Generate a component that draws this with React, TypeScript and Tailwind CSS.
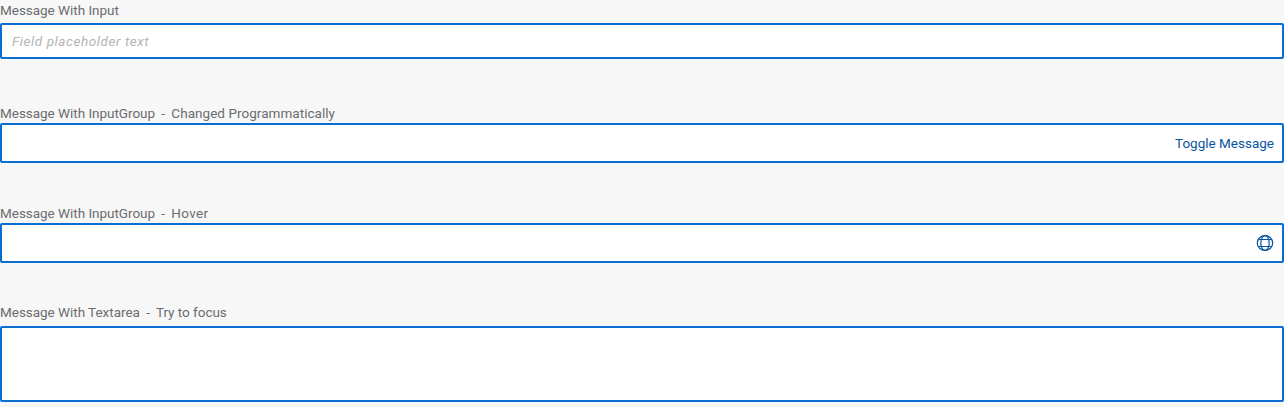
import React from "react";

const fieldClass =
  "block w-full rounded-[2px] border-2 border-[#0a6ed1] bg-white outline-none";

function Label({ htmlFor, className = "", children }: { htmlFor: string; className?: string; children: React.ReactNode }) {
  return (
    <label htmlFor={htmlFor} className={`block h-5 whitespace-nowrap text-[13.5px] leading-[21px] tracking-[-0.03px] text-[#6a6d70] ${className}`}>
      {children}
    </label>
  );
}

function Dash() {
  return <span className="mx-[3px]">-</span>;
}

function GlobeIcon() {
  return (
    <svg width="18" height="18" viewBox="0 0 18 18" fill="none" stroke="currentColor" strokeWidth="1.2">
      <ellipse cx="9" cy="9" rx="7.7" ry="7.4" />
      <ellipse cx="9" cy="9" rx="4.2" ry="7.4" />
      <path d="M2.2 5.5h13.6M2.2 12.5h13.6" />
    </svg>
  );
}

export default function App() {
  return (
    <main className="flex h-[407px] w-full flex-col overflow-hidden bg-[#f7f7f7] font-[Roboto,sans-serif]">
      <div className="h-[103px]">
        <Label htmlFor="name">Message With Input</Label>
        <input
          id="name"
          placeholder="Field placeholder text"
          className={`${fieldClass} mt-[3px] h-9 px-[10px] text-[13.5px] tracking-[0.57px] placeholder:italic placeholder:text-[#b4b4b4]`}
        />
      </div>
      <div className="h-[100px]">
        <Label htmlFor="toggle">Message With InputGroup <Dash /> <span className="tracking-[0.04px]">Changed Programmatically</span></Label>
        <div className={`${fieldClass} flex h-10 items-center`}>
          <input id="toggle" className="h-full min-w-0 flex-1 px-[10px] outline-none" />
          <button className="h-full px-2 pt-px text-[13.5px] text-[#0854a0]">Toggle Message</button>
        </div>
      </div>
      <div className="h-[100px]">
        <Label htmlFor="hover">Message With InputGroup <Dash /> <span className="tracking-[0.3px]">Hover</span></Label>
        <div className={`${fieldClass} flex h-10 items-center`}>
          <input id="hover" className="h-full min-w-0 flex-1 px-[10px] outline-none" />
          <button aria-label="Language" className="flex h-full w-[34px] items-center justify-center text-[#0854a0]">
            <GlobeIcon />
          </button>
        </div>
      </div>
      <div>
        <Label htmlFor="comment" className="-mt-px">Message With Textarea <Dash /> Try to focus</Label>
        <textarea id="comment" className={`${fieldClass} mt-1 h-[76px] resize-none p-2`} />
      </div>
    </main>
  );
}
